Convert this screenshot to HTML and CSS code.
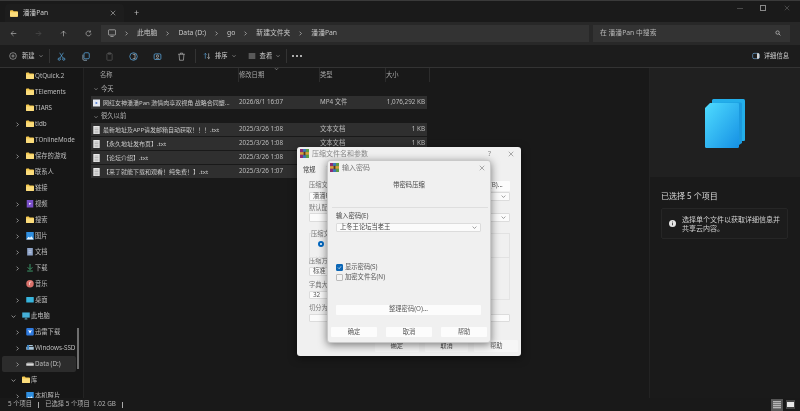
FILE: index.html
```html
<!DOCTYPE html>
<html lang="zh-CN">
<head>
<meta charset="utf-8">
<title>潘潘Pan</title>
<link rel="stylesheet" href="styles.css">
</head>
<body>
<svg class="defs" width="0" height="0" aria-hidden="true">
  <symbol id="folder" viewBox="0 0 16 14"><path d="M0 2.2C0 1 .8.5 1.6.5h4L7.4 2.4h7c.9 0 1.6.6 1.6 1.5v8.3c0 .9-.7 1.5-1.6 1.5H1.6C.7 13.700 0 13.100 0 12.200z" fill="#f5c94f"/><path d="M0 4.500h16v7.700c0 .9-.7 1.500-1.600 1.500H1.600C.7 13.700 0 13.100 0 12.200z" fill="#fbdc7c"/></symbol>
  <symbol id="chev" viewBox="0 0 8 8"><path d="M2.500 1l3 3-3 3" fill="none" stroke="#cfcfcf" stroke-width="1"/></symbol>
  <symbol id="down" viewBox="0 0 8 8"><path d="M1 2.500l3 3 3-3" fill="none" stroke="#cfcfcf" stroke-width="1"/></symbol>
  <symbol id="down-d" viewBox="0 0 8 8"><path d="M1 2.500l3 3 3-3" fill="none" stroke="#666" stroke-width="1"/></symbol>
  <symbol id="doc" viewBox="0 0 8 10"><path d="M0 0h8v10H0z" fill="#e8e8e8"/><path d="M1.500 2.500h5M1.500 4.500h5M1.500 6.500h5M1.500 8.500h5" stroke="#8a8a8a" stroke-width=".7"/></symbol>
  <symbol id="rar" viewBox="0 0 10 10"><path d="M0 0h3.400v10H0z" fill="#8a2f76"/><path d="M3.300 0h3.400v10H3.300z" fill="#3b79b8"/><path d="M6.600 0H10v10H6.600z" fill="#5e9c46"/><path d="M0 3.500h10v2.800H0z" fill="#d8a13b"/><path d="M4 3h2v4H4z" fill="#5b3a1a"/></symbol>
  <symbol id="x" viewBox="0 0 8 8"><path d="M1 1l6 6M7 1L1 7" fill="none" stroke="currentColor" stroke-width=".8"/></symbol>
</svg>

<div class="window">
  <header class="tabbar">
    <div class="tab">
      <svg class="tab-icon"><use href="#folder"/></svg>
      <span class="tab-title">潘潘Pan</span>
      <svg class="tab-close"><use href="#x"/></svg>
    </div>
    <span class="tab-add">+</span>
    <div class="caption">
      <span class="cap-min"></span>
      <span class="cap-max"></span>
      <svg class="cap-close"><use href="#x"/></svg>
    </div>
  </header>

  <div class="addressbar">
    <div class="nav-buttons">
      <svg class="navbtn" viewBox="0 0 10 10"><path d="M9 5H1.500M5 1.500L1.500 5 5 8.500" fill="none" stroke="#bdbdbd" stroke-width=".9"/></svg>
      <svg class="navbtn" viewBox="0 0 10 10"><path d="M1 5h7.500M5 1.500L8.500 5 5 8.500" fill="none" stroke="#4f4f4f" stroke-width=".9"/></svg>
      <svg class="navbtn" viewBox="0 0 10 10"><path d="M5 9V1.500M1.500 5L5 1.500 8.500 5" fill="none" stroke="#bdbdbd" stroke-width=".9"/></svg>
      <svg class="navbtn" viewBox="0 0 10 10"><path d="M8.500 5A3.500 3.500 0 1 1 7.500 2.500M7.800 .8v2.200H5.600" fill="none" stroke="#bdbdbd" stroke-width=".9"/></svg>
    </div>
    <div class="crumbs">
      <svg class="crumb-pc" viewBox="0 0 10 10"><path d="M1.500 1h7a1 1 0 0 1 1 1v4.500a1 1 0 0 1-1 1h-7a1 1 0 0 1-1-1V2a1 1 0 0 1 1-1zM3 9.300h4" fill="none" stroke="#cfcfcf" stroke-width=".8"/></svg>
      <svg class="crumb-sep"><use href="#chev"/></svg><span>此电脑</span>
      <svg class="crumb-sep"><use href="#chev"/></svg><span>Data (D:)</span>
      <svg class="crumb-sep"><use href="#chev"/></svg><span>go</span>
      <svg class="crumb-sep"><use href="#chev"/></svg><span>新建文件夹</span>
      <svg class="crumb-sep"><use href="#chev"/></svg><span>潘潘Pan</span>
    </div>
    <div class="search">
      <span>在 潘潘Pan 中搜索</span>
      <svg class="search-icon" viewBox="0 0 10 10"><circle cx="4.300" cy="4.300" r="2.800" fill="none" stroke="#cfcfcf" stroke-width="1.100"/><path d="M6.400 6.400L9 9" stroke="#cfcfcf" stroke-width="1.200"/></svg>
    </div>
  </div>

  <div class="toolbar">
    <div class="tool tool-new">
      <svg class="tool-icon" viewBox="0 0 12 12"><circle cx="6" cy="6" r="5" fill="none" stroke="#d5d5d5" stroke-width=".8"/><path d="M6 3.500v5M3.500 6h5" stroke="#d5d5d5" stroke-width=".8"/></svg>
      <span>新建</span><svg class="mini"><use href="#down"/></svg>
    </div>
    <i class="tool-sep"></i>
    <svg class="tool-icon t-a" viewBox="0 0 12 12"><path d="M3.500 1l4.500 7M8.500 1L4 8" stroke="#5aa8e0" stroke-width=".9" fill="none"/><circle cx="3" cy="9.500" r="1.500" fill="none" stroke="#5aa8e0"/><circle cx="9" cy="9.500" r="1.500" fill="none" stroke="#5aa8e0"/></svg>
    <svg class="tool-icon t-b" viewBox="0 0 12 12"><rect x="4" y="1" width="7" height="8" rx="1.500" fill="none" stroke="#5aa8e0"/><path d="M2.500 3.500v6c0 .8.700 1.500 1.500 1.500h4" fill="none" stroke="#9fb9cc"/></svg>
    <svg class="tool-icon t-b" viewBox="0 0 12 12"><rect x="2.500" y="2" width="7" height="9" rx="1" fill="none" stroke="#555"/><path d="M4.500 1h3v2h-3z" fill="none" stroke="#555"/></svg>
    <svg class="tool-icon t-b" viewBox="0 0 12 12"><circle cx="6" cy="6" r="5" fill="none" stroke="#5aa8e0"/><path d="M5 3h3v6H5" fill="none" stroke="#d5d5d5" stroke-width=".9"/></svg>
    <svg class="tool-icon t-b" viewBox="0 0 12 12"><rect x="1.500" y="2.500" width="9" height="7.500" rx="1.500" fill="none" stroke="#5aa8e0"/><circle cx="6" cy="5.500" r="1.500" fill="none" stroke="#d5d5d5" stroke-width=".8"/><path d="M3.500 9.500c.5-1.500 4.500-1.500 5 0" fill="none" stroke="#d5d5d5" stroke-width=".8"/></svg>
    <svg class="tool-icon t-b" viewBox="0 0 12 12"><path d="M1.500 3h9M4.500 3V1.500h3V3M2.800 3l.6 8h5.200l.6-8" fill="none" stroke="#c9c9c9" stroke-width=".8"/></svg>
    <i class="tool-sep t-s2"></i>
    <div class="tool t-sort">
      <svg class="tool-icon" viewBox="0 0 12 12"><path d="M3.500 10V2M1.500 4l2-2 2 2" fill="none" stroke="#5aa8e0" stroke-width=".9"/><path d="M8.500 2v8M6.500 8l2 2 2-2" fill="none" stroke="#d5d5d5" stroke-width=".9"/></svg>
      <span>排序</span><svg class="mini"><use href="#down"/></svg>
    </div>
    <div class="tool t-view">
      <svg class="tool-icon" viewBox="0 0 12 12"><path d="M1 3h10M1 6h10M1 9h10" stroke="#d5d5d5" stroke-width="1"/></svg>
      <span>查看</span><svg class="mini"><use href="#down"/></svg>
    </div>
    <i class="tool-sep t-s3"></i>
    <span class="more"><b></b><b></b><b></b></span>
    <div class="tool t-detail">
      <svg class="tool-icon" viewBox="0 0 12 12"><rect x="1" y="2" width="10" height="8" rx="2" fill="none" stroke="#6fa8d8"/><path d="M7.500 2v8h1.500a2 2 0 0 0 2-2V4a2 2 0 0 0-2-2z" fill="#d5d5d5"/></svg>
      <span>详细信息</span>
    </div>
  </div>

  <main class="body">
    <nav class="sidebar">
      <div class="nav-scroll"></div>
      <div class="nav-row"><svg class="ni"><use href="#folder"/></svg><span>QtQuick.2</span></div>
      <div class="nav-row"><svg class="ni"><use href="#folder"/></svg><span>TElements</span></div>
      <div class="nav-row"><svg class="ni"><use href="#folder"/></svg><span>TIARS</span></div>
      <div class="nav-row"><svg class="nc"><use href="#chev"/></svg><svg class="ni"><use href="#folder"/></svg><span>tldb</span></div>
      <div class="nav-row"><svg class="ni"><use href="#folder"/></svg><span>TOnlineMode</span></div>
      <div class="nav-row"><svg class="nc"><use href="#chev"/></svg><svg class="ni"><use href="#folder"/></svg><span>保存的游戏</span></div>
      <div class="nav-row"><svg class="ni"><use href="#folder"/></svg><span>联系人</span></div>
      <div class="nav-row"><svg class="ni"><use href="#folder"/></svg><span>链接</span></div>
      <div class="nav-row"><svg class="nc"><use href="#chev"/></svg><svg class="ni" viewBox="0 0 8 8"><rect width="7" height="8" x=".5" fill="#7a4fc9"/><path d="M3 3l2.500 1L3 5z" fill="#fff"/></svg><span>视频</span></div>
      <div class="nav-row"><svg class="nc"><use href="#chev"/></svg><svg class="ni"><use href="#folder"/></svg><span>搜索</span></div>
      <div class="nav-row"><svg class="nc"><use href="#chev"/></svg><svg class="ni" viewBox="0 0 8 8"><rect width="8" height="8" fill="#2f8fe0"/><path d="M0 8l2.500-3L4 6l1.500-1.500L8 8z" fill="#e6f4ff"/></svg><span>图片</span></div>
      <div class="nav-row"><svg class="nc"><use href="#chev"/></svg><svg class="ni" viewBox="0 0 8 8"><rect x="1" width="6" height="8" fill="#8ea3c8"/><path d="M2.500 3h3M2.500 5h3" stroke="#dfe6f2" stroke-width=".6"/></svg><span>文档</span></div>
      <div class="nav-row"><svg class="nc"><use href="#chev"/></svg><svg class="ni" viewBox="0 0 8 8"><path d="M4 0v5.500M1.500 3.500L4 6l2.500-2.500M1 7.500h6" fill="none" stroke="#3fa06f" stroke-width="1"/></svg><span>下载</span></div>
      <div class="nav-row"><svg class="ni" viewBox="0 0 8 8"><circle cx="4" cy="4" r="4" fill="#d9706a"/><path d="M3.500 5.500V2.500l2-.5" fill="none" stroke="#fff" stroke-width=".7"/></svg><span>音乐</span></div>
      <div class="nav-row"><svg class="nc"><use href="#chev"/></svg><svg class="ni" viewBox="0 0 8 8"><rect y="1" width="8" height="6" rx=".6" fill="#37b4dc"/></svg><span>桌面</span></div>
      <div class="nav-row lv0"><svg class="nc"><use href="#down"/></svg><svg class="ni" viewBox="0 0 8 8"><rect y=".5" width="8" height="5.500" fill="#45b0d8"/><path d="M2.500 7.500h3M4 6v1.500" stroke="#7fd0ea" stroke-width=".7"/></svg><span>此电脑</span></div>
      <div class="nav-row"><svg class="nc"><use href="#chev"/></svg><svg class="ni" viewBox="0 0 8 8"><rect width="8" height="8" rx="1" fill="#2f7be0"/><path d="M2 2l2 1 2-1-2 4z" fill="#fff"/></svg><span>迅雷下载</span></div>
      <div class="nav-row"><svg class="nc"><use href="#chev"/></svg><svg class="ni" viewBox="0 0 8 8"><path d="M1 1h6v1H1zM0 3h8v3H0z" fill="#a8c4d8"/><path d="M1 1h2v5H1z" fill="#3d86c6"/></svg><span class="clip">Windows-SSD</span></div>
      <div class="nav-row sel"><svg class="nc"><use href="#chev"/></svg><svg class="ni" viewBox="0 0 8 8"><path d="M1 2h6v1H1z" fill="#777"/><path d="M0 3.500h8V6H0z" fill="#d8d8d8"/></svg><span>Data (D:)</span></div>
      <div class="nav-row lv0"><svg class="nc"><use href="#down"/></svg><svg class="ni"><use href="#folder"/></svg><span>库</span></div>
      <div class="nav-row"><svg class="nc"><use href="#chev"/></svg><svg class="ni" viewBox="0 0 8 8"><rect width="8" height="8" fill="#2f8fe0"/><path d="M0 8l2.500-3L4 6l1.500-1.500L8 8z" fill="#e6f4ff"/></svg><span>本机照片</span></div>
    </nav>

    <section class="files">
      <div class="col-head">
        <span class="c-name">名称</span>
        <span class="c-date">修改日期<svg class="sort"><use href="#down"/></svg></span>
        <span class="c-type">类型</span>
        <span class="c-size">大小</span>
      </div>
      <div class="group"><svg class="mini"><use href="#down"/></svg><span>今天</span></div>
      <div class="row">
        <span class="r-name"><svg class="fi" viewBox="0 0 8 8"><rect width="8" height="8" fill="#e4e8f0"/><path d="M3 2.500l2.500 1.500L3 5.500z" fill="#3d6fd0"/></svg><span class="ellipsis">网红女神潘潘Pan 激情肉享双视角 战略合同塑...</span></span>
        <span>2026/8/1 16:07</span><span>MP4 文件</span><span class="r-size">1,076,292 KB</span>
      </div>
      <div class="group g2"><svg class="mini"><use href="#down"/></svg><span>很久以前</span></div>
      <div class="row">
        <span class="r-name"><svg class="fi"><use href="#doc"/></svg><span class="ellipsis">最新地址及APP请发邮箱自动获取！！！.txt</span></span>
        <span>2025/3/26 1:08</span><span>文本文档</span><span class="r-size">1 KB</span>
      </div>
      <div class="row">
        <span class="r-name"><svg class="fi"><use href="#doc"/></svg><span class="ellipsis">【永久地址发布页】.txt</span></span>
        <span>2025/3/26 1:08</span><span>文本文档</span><span class="r-size">1 KB</span>
      </div>
      <div class="row">
        <span class="r-name"><svg class="fi"><use href="#doc"/></svg><span class="ellipsis">【论坛介绍】.txt</span></span>
        <span>2025/3/26 1:08</span><span>文本文档</span><span class="r-size">1 KB</span>
      </div>
      <div class="row">
        <span class="r-name"><svg class="fi"><use href="#doc"/></svg><span class="ellipsis">【来了就能下载和观看！纯免费！】.txt</span></span>
        <span>2025/3/26 1:07</span><span>文本文档</span><span class="r-size">1 KB</span>
      </div>
    </section>

    <aside class="preview">
      <div class="preview-top">
        <svg class="stack" viewBox="0 0 40 49">
          <defs><linearGradient id="g" x1="0" y1="0" x2="1" y2="1"><stop offset="0" stop-color="#4fdcff"/><stop offset="1" stop-color="#1590e4"/></linearGradient></defs>
          <path d="M7 1.500Q7 0 8.500 0H38.500Q40 0 40 1.500V41Q40 42 39 42H7z" fill="#23aeea"/>
          <path d="M3.500 3.500H35.500Q37 3.500 37 5V44L34 46V4z" fill="#1c9ade"/>
          <path d="M5 4H32Q34 4 34 6V47.500Q34 49 32.500 49H1.500Q0 49 0 47.500V9z" fill="url(#g)"/>
        </svg>
      </div>
      <div class="preview-bottom">
        <h2>已选择 5 个项目</h2>
        <div class="info">
          <svg class="info-i" viewBox="0 0 8 8"><circle cx="4" cy="4" r="4" fill="#e6e6e6"/><path d="M4 3.500v2.500M4 1.800v1" stroke="#222" stroke-width=".9"/></svg>
          <p>选择单个文件以获取详细信息并共享云内容。</p>
        </div>
      </div>
    </aside>
  </main>

  <footer class="status">
    <span>5 个项目</span><i></i><span>已选择 5 个项目&nbsp; 1.02 GB</span><i></i>
    <div class="view-btns">
      <span class="vb vb-on"><b></b></span>
      <span class="vb vb-off"><b></b></span>
    </div>
  </footer>
</div>

<section class="dialog d-back">
  <div class="d-title">
    <svg class="d-icon"><use href="#rar"/></svg><span>压缩文件名和参数</span>
    <em class="d-help">?</em>
    <svg class="d-x"><use href="#x"/></svg>
  </div>
  <div class="b-tabs"><span class="b-tab">常规</span><span class="b-tab2">高级</span></div>
  <div class="b-panel">
    <div class="b-opts"></div>
    <div class="b-line"><label>压缩文件名(A)</label><span class="btn b-browse">浏览(B)...</span></div>
    <div class="combo b-combo"><span>潘潘Pan.rar</span><svg class="cd"><use href="#down-d"/></svg></div>
    <label class="b-l2">默认配置</label>
    <div class="combo b-combo b-c2"><span></span><svg class="cd"><use href="#down-d"/></svg></div>
    <div class="b-group">
      <label>压缩文件格式</label>
      <span class="radio"></span>
    </div>
    <label class="b-l3 first">压缩方式(C)</label>
    <div class="combo b-small b-s1"><span>标准</span></div>
    <label class="b-l3">字典大小(I)</label>
    <div class="combo b-small"><span>32</span></div>
    <label class="b-l3">切分为分卷(V)</label>
    <div class="combo b-wide"></div>
  </div>
  <div class="d-actions b-actions">
    <span class="btn flat">确定</span><span class="btn flat">取消</span><span class="btn flat">帮助</span>
  </div>
</section>

<section class="dialog d-front">
  <div class="d-title f-title">
    <svg class="d-icon"><use href="#rar"/></svg><span>输入密码</span>
    <svg class="d-x"><use href="#x"/></svg>
  </div>
  <p class="f-caption">带密码压缩</p>
  <hr class="f-rule">
  <div class="f-body">
    <label>输入密码(E)</label>
    <div class="combo f-combo"><span>上冬王论坛当老王</span><svg class="cd"><use href="#down-d"/></svg></div>
    <div class="check c1"><span class="box on"><svg viewBox="0 0 8 8"><path d="M1.500 4l2 2 3-4" fill="none" stroke="#fff" stroke-width="1"/></svg></span><span>显示密码(S)</span></div>
    <div class="check"><span class="box"></span><span>加密文件名(N)</span></div>
    <div class="btn f-manage">整理密码(O)...</div>
  </div>
  <div class="d-actions f-actions">
    <span class="btn">确定</span><span class="btn">取消</span><span class="btn">帮助</span>
  </div>
</section>
</body>
</html>
```

FILE: styles.css
```css
* { box-sizing: border-box; }
html, body { margin: 0; height: 100%; }
body {
  width: 800px;
  height: 411px;
  overflow: hidden;
  position: relative;
  background: #141414;
  font-family: "Noto Sans", "Noto Sans CJK SC", sans-serif;
  font-size: 6.3px;
  line-height: 1;
  color: #c9c9c9;
  filter: blur(0.35px);
}
.defs { position: absolute; }
.window { display: flex; flex-direction: column; height: 411px; border-top: 1px solid #3a3a3a; }

/* tab strip */
.tabbar { height: 21px; display: flex; align-items: flex-end; background: #1a1a1a; padding-left: 5px; flex: none; }
.tab { width: 119px; height: 18px; background: #1d1d1d; border-radius: 4px 4px 0 0; display: flex; align-items: center; padding: 0 6px 0 5px; }
.tab-icon { width: 8px; height: 7px; flex: none; }
.tab-title { margin-left: 5px; color: #cfcfcf; font-size: 6.6px; }
.tab-close { width: 6px; height: 6px; margin-left: auto; margin-right: 2px; color: #bbb; }
.tab-add { margin: 0 0 5px 10px; font-size: 9px; color: #bbb; }
.caption { margin-left: auto; display: flex; align-items: center; height: 100%; padding: 0 10px 7px 0; }
.cap-min { width: 6px; height: 1px; background: #4a4a4a; margin-right: 17px; }
.cap-max { width: 6px; height: 6px; border: 1px solid #888; margin-right: 18px; }
.cap-close { width: 6px; height: 6px; color: #666; }

/* address row */
.addressbar { height: 23px; flex: none; display: flex; align-items: center; background: #282828; padding-bottom: 1px; }
.nav-buttons { width: 101px; display: flex; padding-left: 10px; gap: 18px; }
.navbtn { width: 7px; height: 7px; flex: none; }
.crumbs { width: 488px; height: 17px; background: #333; display: flex; align-items: center; padding-left: 7px; color: #c6c6c6; font-size: 6.8px; }
.crumb-pc { width: 8px; height: 8px; margin-right: 8px; }
.crumb-sep { width: 5px; height: 5px; margin: 0 8px; flex: none; }
.crumb-pc + .crumb-sep { margin-left: 0; }
.search { width: 197px; height: 17px; margin-left: 4px; background: #333; display: flex; align-items: center; padding: 0 9px 0 7px; color: #b5b5b5; font-size: 6.8px; }
.search-icon { width: 6px; height: 6px; margin-left: auto; }

/* command bar */
.toolbar { height: 23px; flex: none; display: flex; align-items: center; background: #1c1c1c; border-bottom: 1px solid #333; padding-left: 9px; color: #cfcfcf; }
.tool { display: flex; align-items: center; }
.tool-icon { width: 8px; height: 8px; flex: none; }
.tool span { margin-left: 4px; white-space: nowrap; }
.tool-new span { margin-left: 5px; }
.mini { width: 4px; height: 4px; margin-left: 4px; flex: none; }
.tool-new { width: 40px; }
.tool-sep { width: 1px; height: 14px; background: #333; flex: none; }
.t-a { margin-left: 7px; width: 9px; height: 9px; }
.t-b { margin-left: 15px; width: 9px; height: 9px; }
.t-s2 { margin-left: 9px; }
.t-sort { margin-left: 7px; }
.t-view { margin-left: 12px; }
.t-s3 { margin-left: 6px; }
.more { display: flex; gap: 2px; margin-left: 5px; }
.more b { width: 2px; height: 2px; border-radius: 50%; background: #ddd; }
.t-detail { margin-left: auto; margin-right: 11px; }

/* three panes */
.body { flex: 1; min-height: 0; display: flex; background: #191919; }
.sidebar { width: 84px; flex: none; position: relative; overflow: hidden; border-right: 1px solid #232323; background: #161616; }
.nav-scroll { position: absolute; left: 77px; top: 260px; width: 2px; height: 41px; background: #6e6e6e; }
.nav-row { height: 16px; display: flex; align-items: center; position: relative; white-space: nowrap; color: #bdbdbd; width: 74px; margin-left: 2px; padding-left: 24px; overflow: hidden; }
.nav-row span { margin-left: 1px; }
.nav-row.lv0 { padding-left: 20px; }
.nav-row.sel { background: #2c2c2c; border-radius: 2px; }
.ni { width: 8px; height: 7.500px; flex: none; }
.nc { width: 5px; height: 5px; position: absolute; left: 13px; top: 5.500px; }
.lv0 .nc { left: 9px; }
.clip { overflow: hidden; }

.files { width: 565px; flex: none; padding-left: 7px; }
.col-head { height: 14px; display: grid; grid-template-columns: 148px 81px 66px 44px; align-items: center; color: #a8a8a8; }
.col-head > span { height: 14px; display: flex; align-items: center; position: relative; border-right: 1px solid #2c2c2c; padding-left: 2px; margin-left: -2px; }
.col-head > .c-name { padding-left: 11px; }
.sort { position: absolute; left: 37px; top: -1px; width: 5px; height: 4px; }
.group { height: 14px; display: flex; align-items: center; padding-left: 3px; color: #b5b5b5; }
.group span { margin-left: 3px; }
.group .mini { margin-left: 0; }
.group.g2 { height: 13px; }
.row { height: 13px; margin-bottom: 1px; display: grid; grid-template-columns: 148px 81px 66px 41px; align-items: center; background: #2f2f2f; color: #bdbdbd; width: 336px; }
.r-name { display: flex; align-items: center; padding-left: 2px; min-width: 0; }
.fi { width: 7px; height: 8px; flex: none; margin-right: 3px; }
.ellipsis { white-space: nowrap; color: #c9c9c9; font-size: 6px; }
.r-size { text-align: right; padding-right: 2px; white-space: nowrap; }

.preview { flex: 1; display: flex; flex-direction: column; border-left: 1px solid #232323; }
.preview-top { height: 109px; background: #202020; display: flex; justify-content: center; padding: 31px 0 0 0; }
.stack { width: 40px; height: 49px; }
.preview-bottom { flex: 1; background: #1a1a1a; padding: 15px 11px 0 11px; }
.preview-bottom h2 { margin: 0; font-size: 8px; font-weight: 400; color: #d8d8d8; }
.info { margin-top: 8px; height: 31px; width: 127px; background: #1c1c1c; border: 1px solid #262626; border-radius: 2px; display: flex; align-items: center; padding: 0 7px; gap: 6px; }
.info-i { width: 7px; height: 7px; flex: none; }
.info p { margin: 0; font-size: 7px; line-height: 9px; color: #cfcfcf; }

.status { height: 13px; flex: none; display: flex; align-items: center; background: #191919; padding-left: 8px; color: #b5b5b5; }
.status i { width: 1px; height: 6px; background: #aaa; margin: 0 6px; }
.view-btns { margin-left: auto; display: flex; align-items: center; gap: 3px; padding-right: 5px; }
.vb { display: flex; align-items: center; justify-content: center; }
.vb-on { width: 12px; height: 12px; background: #555; }
.vb-on b { width: 8px; height: 8px; background: repeating-linear-gradient(#b5b5b5 0 1px, #777 1px 2px); }
.vb-off { width: 9px; height: 9px; background: #444; }
.vb-off b { width: 7px; height: 5px; background: #e8e8e8; }

/* dialogs */
.dialog { position: absolute; background: #f0f0f0; color: #555; border-radius: 3px; box-shadow: 0 2px 8px rgba(0,0,0,.5); display: flex; flex-direction: column; }
.d-back { left: 297px; top: 147px; width: 224px; height: 209px; color: #777; }
.d-front { left: 327px; top: 160px; width: 164px; height: 183px; border: 1px solid #c9c9c9; }
.d-title { height: 13px; flex: none; display: flex; align-items: center; padding: 0 7px 0 3px; position: relative; color: #888; font-size: 7px; }
.d-title span { margin-left: 3px; }
.d-icon { width: 9px; height: 9px; flex: none; }
.d-help { margin-left: auto; margin-right: 17px; font-style: normal; }
.d-x { width: 6px; height: 6px; color: #777; margin-left: auto; }
.d-help + .d-x { margin-left: 0; }
.b-tabs { display: flex; margin-top: 5px; height: 11px; padding-left: 6px; gap: 11px; align-items: center; color: #333; }
.b-panel { flex: 1; padding: 5px 11px 0 12px; position: relative; }
.b-opts { position: absolute; left: 190px; right: 11px; top: 57px; height: 67px; border: 1px solid #e4e4e4; }
.b-line { height: 9px; display: flex; align-items: center; justify-content: space-between; }
.btn { background: #fcfcfc; display: flex; align-items: center; justify-content: center; border-radius: 1px; color: #555; white-space: nowrap; }
.b-browse { width: 40px; height: 10px; }
.combo { background: #fbfbfb; border: 1px solid #dcdcdc; display: flex; align-items: center; padding: 0 3px; border-radius: 1px; color: #555; }
.cd { width: 5px; height: 5px; margin-left: auto; }
.b-combo { height: 9px; margin-top: 2px; }
.b-l2 { display: block; margin-top: 4px; }
.b-c2 { margin-top: 2px; }
.b-group { height: 25px; margin-top: 11px; border: 1px solid #e2e2e2; position: relative; padding-left: 1px; }
.b-group label { display: block; width: max-content; margin-top: -3px; background: #f0f0f0; }
.radio { display: block; width: 6px; height: 6px; border-radius: 50%; border: 2px solid #0067c0; background: #fff; margin: 3px 0 0 7px; }
.b-l3 { display: block; margin-top: 6px; }
.b-l3.first { margin-top: 0; }
.b-small { width: 40px; height: 8px; margin-top: 3px; }
.b-s1 { height: 9px; margin-top: 2px; }
.b-wide { height: 8px; margin-top: 3px; }
.d-actions { display: flex; }
.b-actions { height: 12px; margin: 0 3px 4px 78px; gap: 6px; }
.b-actions .flat { flex: 1; background: #f6f6f6; }

.f-title { height: 12px; padding: 1px 5px 0 2px; color: #777; }
.f-caption { margin: 9px 0 0; text-align: center; color: #444; }
.f-rule { margin: 19px 2px 0 4px; border: 0; border-top: 1px solid #dedede; }
.f-body { flex: 1; padding: 5px 9px 0 8px; }
.f-body label { display: block; color: #444; }
.f-combo { height: 9px; margin: 3px 0 0; color: #444; }
.check { display: flex; align-items: center; gap: 2px; height: 7px; margin-top: 3px; color: #555; }
.check.c1 { margin-top: 32px; }
.box { width: 7px; height: 7px; border: 1px solid #bbb; background: #f4f4f4; border-radius: 1px; display: block; }
.box.on { background: #0c67b6; border-color: #0c67b6; display: flex; }
.box.on svg { width: 5px; height: 5px; }
.f-manage { height: 10px; margin-top: 24px; width: 145px; }
.f-actions { height: 10px; margin: 0 3px 5px 3px; justify-content: space-between; }
.f-actions .btn { width: 46px; }
```
